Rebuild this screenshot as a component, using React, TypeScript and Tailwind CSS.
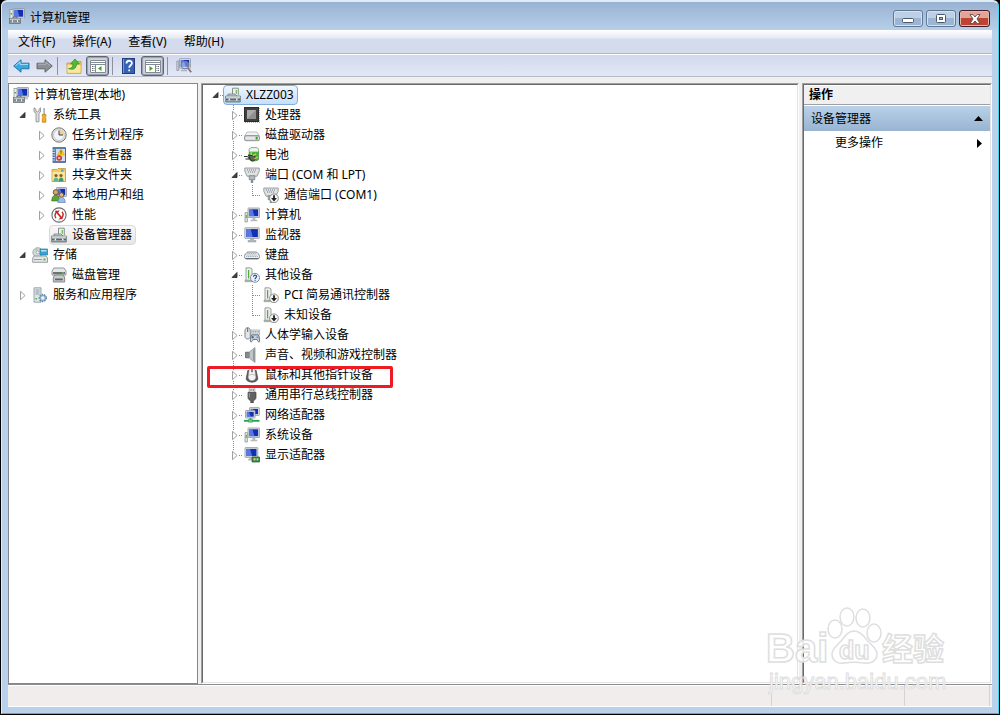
import { ReactNode, useState } from "react";

interface TreeNode {
  label: string;
  icon: ReactNode;
  level: number;
  state?: "open" | "closed";
  selected?: "active" | "inactive";
  last?: boolean;
  marked?: boolean;
}

const Icon = ({ children }: { children: ReactNode }) => (
  <svg viewBox="0 0 16 16" className="w-4 h-4 shrink-0" aria-hidden="true">
    {children}
  </svg>
);

// Blue display on a grey stand, shared by several icons
const Screen = ({ x = 3, y = 1, w = 12, h = 9 }: { x?: number; y?: number; w?: number; h?: number }) => (
  <>
    <rect x={x} y={y} width={w} height={h} rx="0.5" fill="#dfe2e4" stroke="#8f979e" strokeWidth="0.8" />
    <rect x={x + 1.3} y={y + 1.3} width={w - 2.6} height={h - 2.6} fill="#1230b4" />
    <path d={`M${x + 1.3} ${y + 1.3}h${w / 2 - 2.6}l2 ${h - 2.6}h-${w / 2 - 0.6}z`} fill="#6d8df0" opacity="0.75" />
  </>
);

const DownBadge = () => (
  <>
    <circle cx="11" cy="11.3" r="4.4" fill="#f4f4f4" stroke="#777" strokeWidth="0.8" />
    <path d="M10.1 8.3h1.8v2.7h2L11 14.4 8.1 11h2z" fill="#222" />
  </>
);

const ManagementIcon = () => (
  <Icon>
    <Screen x={4} y={0.5} w={11.5} h={9.5} />
    <rect x="1" y="1.5" width="3" height="9" fill="#e9ebec" stroke="#8a9096" strokeWidth="0.7" />
    <rect x="1.5" y="5" width="1.5" height="1.5" fill="#45b02d" />
    <path d="M10 10.4h5v2h-5z" fill="#c5cace" />
    <path d="M4 10.5V9h4v1.5" fill="none" stroke="#5e666c" strokeWidth="0.9" />
    <rect x="0.5" y="10.5" width="11" height="5" fill="#93a0a5" stroke="#626c72" strokeWidth="0.7" />
    <path d="M1 11.2h10" stroke="#cfd7da" />
    <path d="M1 13.1h10" stroke="#5b666b" strokeWidth="0.6" />
    <path d="M3 12.3h1v2H3zM8 12.3h1v2H8z" fill="#eef1f2" />
  </Icon>
);

const ToolsIcon = () => (
  <Icon>
    <path d="M2 .8v4l2 1.4v8.6h3V6.2L8.5 5V.8L7 2.2v2L5.4 5 4 4.2v-2z" fill="#dcdfe1" stroke="#85898d" strokeWidth="0.8" />
    <path d="M11.5 1h1.2v7h-1.2z" fill="#8b9196" />
    <path d="M10.3 7.5h3.6v2l-.6 1 .6 1v3.7h-3.6v-3.7l.6-1-.6-1z" fill="#f4b21c" stroke="#b97908" strokeWidth="0.7" />
  </Icon>
);

const ClockIcon = () => (
  <Icon>
    <circle cx="8" cy="8" r="7.2" fill="#e6e3dc" stroke="#777" />
    <circle cx="8" cy="8" r="5.4" fill="#f0f6fd" stroke="#b6b6b6" strokeWidth="0.6" />
    <path d="M8 8V2.6A5.4 5.4 0 0 1 13.4 8z" fill="#f4cf91" />
    <path d="M8 3.6V8h4" fill="none" stroke="#33455c" />
  </Icon>
);

const EventIcon = () => (
  <Icon>
    <rect x="2" y="0.7" width="12.5" height="14.6" fill="#5b81bd" stroke="#30528f" strokeWidth="0.8" />
    <path d="M5 2h9v12H5z" fill="#cfdff3" />
    <path d="M1 3h3M1 5.5h3M1 8h3M1 10.5h3M1 13h3" stroke="#e8eef6" strokeWidth="0.8" />
    <path d="M10 1.5L13.5 8h-7z" fill="#ffd51f" stroke="#c99800" strokeWidth="0.5" />
    <path d="M10 3.5v2.3M10 6.3v.8" stroke="#222" strokeWidth="0.8" />
    <circle cx="8.2" cy="11" r="2.8" fill="#da2b2e" />
    <path d="M7 9.8l2.4 2.4M9.4 9.8L7 12.2" stroke="#fff" strokeWidth="0.8" />
  </Icon>
);

const SharedIcon = () => (
  <Icon>
    <path d="M1 2.5h5l1-1h7.5v13H1z" fill="#efca66" stroke="#c29a3a" strokeWidth="0.8" />
    <path d="M1.5 5h12.5v9H1.5z" fill="#fbe597" />
    <rect x="10" y="2.5" width="2.5" height="2" fill="#5a9ae0" />
    <circle cx="5" cy="8.5" r="1.6" fill="#805a30" />
    <circle cx="10" cy="8.5" r="1.6" fill="#805a30" />
    <path d="M2.4 14.5c0-5.5 5.2-5.5 5.2 0z" fill="#58b79a" />
    <path d="M7.6 14.5c0-5.5 5-5.5 5 0z" fill="#3d9a6a" />
  </Icon>
);

const UsersIcon = () => (
  <Icon>
    <Screen x={5.5} y={0.5} w={10} h={9} />
    <circle cx="4.8" cy="5.2" r="2.6" fill="#d8a465" stroke="#5f4021" strokeWidth="0.8" />
    <path d="M.7 14c0-8 8-8 8 0z" fill="#5ca338" stroke="#33681c" strokeWidth="0.6" />
    <circle cx="10.5" cy="8" r="2.3" fill="#e6b97f" stroke="#6a4726" strokeWidth="0.8" />
    <path d="M6.8 15.5c0-7 7.5-7 7.5 0z" fill="#9dbbe4" stroke="#4a73ad" strokeWidth="0.6" />
  </Icon>
);

const PerformanceIcon = () => (
  <Icon>
    <circle cx="8" cy="8" r="7.1" fill="#fff" stroke="#6b6b6b" strokeWidth="1.1" />
    <path d="M5 11.2C2.6 8.6 4.6 4.2 8 4.2M11 4.8c2.4 2.6.6 7-2.6 7" fill="none" stroke="#c8292b" strokeWidth="1.4" />
    <path d="M4.6 3.8l6.6 8" stroke="#c22023" strokeWidth="1.7" />
    <path d="M3 8h1M12 8h1M8 2.6v1M8 12.5v1" stroke="#777" strokeWidth="0.7" />
  </Icon>
);

const DeviceIcon = () => (
  <Icon>
    <path d="M7.5 7V1.2h5.8V8" fill="#edf0ef" stroke="#89918f" />
    <path d="M10.7 3h1.1v3.7h-1.1z" fill="#56b62d" />
    <path d="M3 9V7h7l2 2" fill="#c9cecf" stroke="#7a8284" strokeWidth="0.8" />
    <path d="M.7 9h14.6v6H.7z" fill="#98a3a5" stroke="#667072" strokeWidth="0.8" />
    <path d="M1 9.3h14v1.5H1z" fill="#d5dbdb" />
    <path d="M1 12.5h14" stroke="#596466" />
    <path d="M3.6 11.5h1.5v2H3.6zM11 11.5h1.5v2H11z" fill="#edf0f0" />
  </Icon>
);

const StorageIcon = () => (
  <Icon>
    <circle cx="5.7" cy="5.5" r="4.8" fill="#d3dadd" stroke="#8f989c" strokeWidth="0.8" />
    <path d="M5.7 5.5L2 2.5A4.8 4.8 0 0 1 6 .9z" fill="#a9d6b0" />
    <circle cx="5.7" cy="5.5" r="1.4" fill="#fff" stroke="#888" strokeWidth="0.6" />
    <path d="M8 2h7.5v6H8z" fill="#3aa1d5" stroke="#247aa8" strokeWidth="0.7" />
    <path d="M9 3h5.5v1.5H9z" fill="#b5e6fa" />
    <path d="M2 9h12l1.5 2v4.3H.7V11z" fill="#e3e6e7" stroke="#858c90" strokeWidth="0.8" />
    <path d="M2 12.5h8" stroke="#99a1a5" />
    <path d="M11.5 11.5h2v2h-2z" fill="#49c525" />
  </Icon>
);

const DiskIcon = () => (
  <Icon>
    <path d="M3 1h10l2 3v4H1V4z" fill="#e4e6e7" stroke="#7b8184" strokeWidth="0.8" />
    <path d="M2 5h12v2H2z" fill="#6c7276" />
    <path d="M11 5.3h2v1.2h-2z" fill="#5bd030" />
    <path d="M3.5 8h9l1.2 3v4H2.3v-4z" fill="#c7cbcd" stroke="#6b7174" strokeWidth="0.8" />
    <path d="M4 11.5h7.7v1.8H4z" fill="#5e6468" />
  </Icon>
);

const ServicesIcon = () => (
  <Icon>
    <path d="M2 .8h7v14.4H2z" fill="#dfe5e9" stroke="#83909a" strokeWidth="0.8" />
    <path d="M3.5 3h4M3.5 5h4M3.5 7h4" stroke="#879aa6" />
    <path d="M3.5 11h1.5v1.5H3.5z" fill="#46b22e" />
    <circle cx="10.8" cy="11" r="3.4" fill="#a9c7df" stroke="#6288a8" strokeWidth="1.6" strokeDasharray="1.4 1" />
    <circle cx="10.8" cy="11" r="2.6" fill="#c5dced" stroke="#6288a8" strokeWidth="0.6" />
    <circle cx="10.8" cy="11" r="1" fill="#fff" />
  </Icon>
);

const CpuIcon = () => (
  <Icon>
    <path d="M1 15.3h15M15.3 1v14" stroke="#d9a650" strokeWidth="1.2" strokeDasharray="1 1" />
    <rect x="0.5" y="0.5" width="14" height="14" fill="#404040" stroke="#2b2b2b" />
    <path d="M3 3h9v9H3z" fill="#8f8f8f" />
    <path d="M3 3h9l-9 9z" fill="#ababab" />
  </Icon>
);

const DriveIcon = () => (
  <Icon>
    <path d="M3 5h10l2.4 4H.6z" fill="#f2f2f3" stroke="#a6a9ad" strokeWidth="0.7" />
    <rect x="0.5" y="8.7" width="15" height="5" rx="1.6" fill="#d8dbdc" stroke="#777c80" strokeWidth="0.8" />
    <path d="M2 11h9" stroke="#f5f5f5" />
    <path d="M11.7 9.8h1.9v2.7h-1.9z" fill="#36a61e" />
  </Icon>
);

const BatteryIcon = () => (
  <Icon>
    <path d="M5.2 2.2c0-2.2 9.3-2.2 9.3 0v10c0 2.3-9.3 2.3-9.3 0z" fill="#3cb72a" stroke="#4b8243" strokeWidth="0.7" />
    <path d="M5.4 2.2c0-1.9 8.9-1.9 8.9 0v2.6H5.4z" fill="#eef4ed" stroke="#a9b5a7" strokeWidth="0.4" />
    <path d="M7.2 5.2v7.5" stroke="#b3efa8" strokeWidth="1.2" />
    <path d="M4.2 8l3.3 6c3.4.4 4.8-2.7 3-5z" fill="#62675f" stroke="#22251f" strokeWidth="0.9" />
    <path d="M8.8 8.7l3.4-1.9M10.4 11.8l3.4-1.9" stroke="#d4c15c" strokeWidth="1.4" />
    <path d="M0 9.5h3.5l2 2.5H1.5" fill="none" stroke="#333" />
  </Icon>
);

const PlugShape = () => (
  <>
    <path d="M.8 1h14.4v3.2L13 9.2H3L.8 4.2z" fill="#dfe2e3" stroke="#858b8e" strokeWidth="0.8" />
    <path d="M3 3h10M4 5h8" stroke="#737a7e" strokeDasharray="1 1" />
    <path d="M5.2 8.7h5.6v4H5.2z" fill="#b4babd" stroke="#71777a" strokeWidth="0.7" />
    <path d="M6.8 12.7h2.4V16H6.8z" fill="#868c8f" />
  </>
);

const PortIcon = () => (
  <Icon>
    <PlugShape />
  </Icon>
);

const PortDownIcon = () => (
  <Icon>
    <PlugShape />
    <DownBadge />
  </Icon>
);

const ComputerIcon = () => (
  <Icon>
    <Screen x={4} y={1} w={11.5} h={9.5} />
    <path d="M8.5 10.7h2.8v2h2v1.5H6.5v-1.5h2z" fill="#b5babd" />
    <path d="M1 5.5h2.4V15H1z" fill="#dce0e1" stroke="#889095" strokeWidth="0.7" />
    <path d="M1.6 8h1.2v3H1.6z" fill="#4ab832" />
  </Icon>
);

const MonitorIcon = () => (
  <Icon>
    <Screen x={0.8} y={0.8} w={14.4} h={10.6} />
    <path d="M6.5 11.7h3v1.8h2.5V15H4v-1.5h2.5z" fill="#b5babd" stroke="#8b9195" strokeWidth="0.5" />
  </Icon>
);

const KeyboardIcon = () => (
  <Icon>
    <path d="M4 5h8c1.5 0 3.6 3 3.6 4.6S14.5 12 13 12H3C1.5 12 .4 11.2.4 9.6S2.5 5 4 5z" fill="#eceeef" stroke="#6b747d" strokeWidth="0.8" />
    <path d="M3.5 6.5h9M2.7 8h10.6M2.2 9.5h11.6" stroke="#8794a0" strokeWidth="0.8" strokeDasharray="1 .8" />
    <path d="M1.5 11.5h13" stroke="#4b555e" strokeWidth="0.8" />
  </Icon>
);

const TowerShape = () => (
  <>
    <path d="M2 .8h4l2 1v12H2z" fill="#eceeed" stroke="#878c8b" strokeWidth="0.8" />
    <path d="M4 3h1.2v8.5H4z" fill="#51af36" />
    <path d="M1 13.2h8v1.5H1z" fill="#c3c9c7" stroke="#868c8a" strokeWidth="0.6" />
  </>
);

const OtherIcon = () => (
  <Icon>
    <TowerShape />
    <circle cx="11" cy="10.8" r="4.5" fill="#eef2fa" stroke="#68758b" strokeWidth="0.8" />
    <path d="M9.5 9.8c0-2.2 3.1-2 3.1-.2 0 1.1-1.5 1.1-1.5 2.3M11.1 12.7v1" fill="none" stroke="#204ea4" strokeWidth="1.2" />
  </Icon>
);

const UnknownIcon = () => (
  <Icon>
    <TowerShape />
    <DownBadge />
  </Icon>
);

const HidIcon = () => (
  <Icon>
    <path d="M1 4c0-4.5 5.3-4.5 5.3 0v5.5c0 3.3-5.3 3.3-5.3 0z" fill="#e4e7e7" stroke="#60676b" strokeWidth="0.8" />
    <path d="M3.7 1v4" stroke="#5a6165" />
    <path d="M6.7 3h9v5h-9z" fill="#e4e7e9" stroke="#8c9298" strokeWidth="0.6" />
    <path d="M7.5 4.5H15M7.5 6H15" stroke="#838b93" strokeWidth="0.8" strokeDasharray="1 .7" />
    <path d="M7 9c1-2 2.5-1 4-1s3-1 4 1l.8 5.2c-.3 1.5-1.7 1-2.8-1.7H9.2c-1.2 2.7-2.7 3-3 1.5z" fill="#c7d1da" stroke="#4c5c6c" strokeWidth="0.8" />
    <path d="M8.7 9v2.5M7.5 10.2H10M12.5 10.2h1.8" stroke="#334b67" strokeWidth="0.8" />
  </Icon>
);

const SpeakerIcon = () => (
  <Icon>
    <path d="M1.5 5.2h4v5.6h-4z" fill="#858a8d" stroke="#555b5e" strokeWidth="0.7" />
    <path d="M5.3 5L11 .5v15L5.3 11z" fill="#c0c5c7" stroke="#81878b" strokeWidth="0.7" />
    <path d="M9 3.5L11 1v14l-2-2.5z" fill="#92989b" />
  </Icon>
);

const MouseIcon = () => (
  <Icon>
    <path d="M4 3L2.3 11c-1 5.5 12.4 5.5 11.4 0L12 3" fill="#606060" stroke="#3c3c3c" strokeWidth="0.7" />
    <path d="M5.3 2c0-2 5.4-2 5.4 0l1.1 7.5c.6 5.5-8.2 5.5-7.6 0z" fill="#f3f3f2" stroke="#8a8a8a" strokeWidth="0.5" />
    <path d="M8 1.5v3.7" stroke="#4b4b4b" strokeWidth="1.3" />
    <path d="M4.8 8.3c1.8-1.2 4.6-1.2 6.4 0" fill="none" stroke="#9c9c9c" strokeWidth="0.6" />
  </Icon>
);

const UsbIcon = () => (
  <Icon>
    <path d="M5.2.7h5.6v5H5.2z" fill="#e8e8e8" stroke="#9a9a9a" strokeWidth="0.7" />
    <path d="M6.5 2h1v2h-1zM8.7 2h1v2h-1z" fill="#777" />
    <path d="M4 5.3h8v5.2c0 2-1.5 2.4-2.7 3.2V16H6.8v-2.3C5.5 13 4 12.5 4 10.5z" fill="#626262" stroke="#424242" strokeWidth="0.7" />
    <path d="M5.3 6v4.5" stroke="#a1a1a1" />
  </Icon>
);

const NetworkIcon = () => (
  <Icon>
    <Screen x={5.5} y={0.6} w={9.8} h={7.8} />
    <Screen x={1.5} y={3.5} w={9.5} h={7.5} />
    <path d="M5.5 11h2v2h-2z" fill="#55ab50" />
    <path d="M0 13.8h15.5" stroke="#25a55c" strokeWidth="1.9" />
    <path d="M4.5 12.4h4v2.8h-4z" fill="#65cc83" stroke="#298e4a" strokeWidth="0.5" />
  </Icon>
);

const DisplayIcon = () => (
  <Icon>
    <Screen x={1} y={0.6} w={12.8} h={9.8} />
    <path d="M5 10.5h3v3H4V12h1z" fill="#b9bec1" />
    <path d="M8 10h7.5v5H8z" fill="#3d8e50" stroke="#23542d" strokeWidth="0.7" />
    <path d="M9.5 11.3h2v2h-2z" fill="#f0d15d" />
    <path d="M12.6 11.3h1.7v2h-1.7z" fill="#b6d7a8" />
  </Icon>
);

const leftTree: TreeNode[] = [
  { label: "计算机管理(本地)", icon: <ManagementIcon />, level: 0 },
  { label: "系统工具", icon: <ToolsIcon />, level: 1, state: "open" },
  { label: "任务计划程序", icon: <ClockIcon />, level: 2, state: "closed" },
  { label: "事件查看器", icon: <EventIcon />, level: 2, state: "closed" },
  { label: "共享文件夹", icon: <SharedIcon />, level: 2, state: "closed" },
  { label: "本地用户和组", icon: <UsersIcon />, level: 2, state: "closed" },
  { label: "性能", icon: <PerformanceIcon />, level: 2, state: "closed" },
  { label: "设备管理器", icon: <DeviceIcon />, level: 2, selected: "inactive" },
  { label: "存储", icon: <StorageIcon />, level: 1, state: "open" },
  { label: "磁盘管理", icon: <DiskIcon />, level: 2 },
  { label: "服务和应用程序", icon: <ServicesIcon />, level: 1, state: "closed" },
];

const deviceTree: TreeNode[] = [
  { label: "XLZZ003", icon: <DeviceIcon />, level: 0, state: "open", selected: "active" },
  { label: "处理器", icon: <CpuIcon />, level: 1, state: "closed" },
  { label: "磁盘驱动器", icon: <DriveIcon />, level: 1, state: "closed" },
  { label: "电池", icon: <BatteryIcon />, level: 1, state: "closed" },
  { label: "端口 (COM 和 LPT)", icon: <PortIcon />, level: 1, state: "open" },
  { label: "通信端口 (COM1)", icon: <PortDownIcon />, level: 2, last: true },
  { label: "计算机", icon: <ComputerIcon />, level: 1, state: "closed" },
  { label: "监视器", icon: <MonitorIcon />, level: 1, state: "closed" },
  { label: "键盘", icon: <KeyboardIcon />, level: 1, state: "closed" },
  { label: "其他设备", icon: <OtherIcon />, level: 1, state: "open" },
  { label: "PCI 简易通讯控制器", icon: <UnknownIcon />, level: 2 },
  { label: "未知设备", icon: <UnknownIcon />, level: 2, last: true },
  { label: "人体学输入设备", icon: <HidIcon />, level: 1, state: "closed" },
  { label: "声音、视频和游戏控制器", icon: <SpeakerIcon />, level: 1, state: "closed" },
  { label: "鼠标和其他指针设备", icon: <MouseIcon />, level: 1, state: "closed", marked: true },
  { label: "通用串行总线控制器", icon: <UsbIcon />, level: 1, state: "closed" },
  { label: "网络适配器", icon: <NetworkIcon />, level: 1, state: "closed" },
  { label: "系统设备", icon: <ComputerIcon />, level: 1, state: "closed" },
  { label: "显示适配器", icon: <DisplayIcon />, level: 1, state: "closed", last: true },
];

const dots = { stroke: "#8a8a8a", strokeDasharray: "1 1", fill: "none", shapeRendering: "crispEdges" as const };

const Arrow = ({ state }: { state: "open" | "closed" }) =>
  state === "open" ? (
    <path d="M12 7.5v5H7z" fill="#404040" stroke="#262626" strokeWidth="0.8" />
  ) : (
    <path d="M7.5 6.3v8.4l4.6-4.2z" fill="#fff" stroke="#a0a0a0" />
  );

function TreeRow({ node, lines }: { node: TreeNode; lines: boolean }) {
  const { level, state, selected } = node;
  const drawn = lines && level > 0;
  const box =
    selected === "active"
      ? "border-[#84acdd] bg-linear-to-b from-[#f0f7fe] to-[#c4dffb]"
      : selected === "inactive"
        ? "border-[#d9d9d9] bg-linear-to-b from-[#f8f8f8] to-[#e6e6e6]"
        : "border-transparent";
  const indent = lines ? (level === 0 ? "pl-[3px]" : "pl-[22px]") : level === 0 ? "pl-0.5" : "pl-1";

  return (
    <li className={`relative flex h-5 items-center whitespace-nowrap ${indent}`}>
      {level === 2 && (
        <svg viewBox="0 0 19 20" className="w-[19px] h-5 shrink-0" aria-hidden="true">
          {lines && <path d="M8.5 0v20" {...dots} />}
        </svg>
      )}
      {state && (
        <button
          type="button"
          aria-label={`${state === "open" ? "折叠" : "展开"} ${node.label}`}
          className="w-[17px] h-5 shrink-0"
        >
          <svg viewBox="0 0 17 20" className="w-[17px] h-5">
            {drawn && <path d={node.last ? "M8.5 0v5" : "M8.5 0v5M8.5 16v4"} {...dots} />}
            {lines && <path d="M14 10.5h3" {...dots} />}
            <Arrow state={state} />
          </svg>
        </button>
      )}
      {!state && level > 0 && (
        <svg viewBox="0 0 17 20" className="w-[17px] h-5 shrink-0" aria-hidden="true">
          {drawn && <path d={`M8.5 0v${node.last ? 11 : 20}M8.5 10.5h9`} {...dots} />}
        </svg>
      )}
      <span className={`flex h-5 items-center gap-[5px] rounded-sm border pl-px pr-[3px] ${box}`}>
        {node.icon}
        <span>{node.label}</span>
      </span>
      {node.marked && (
        <span className="absolute left-1 top-px z-10 h-[22px] w-[186px] rounded-xs border-3 border-[#ee1b24]" />
      )}
    </li>
  );
}

const ToolSeparator = () => <span className="ml-[3px] mr-2 h-[18px] w-px bg-[#8b919d]" />;

function Toolbar() {
  const [treeShown, setTreeShown] = useState(true);
  const [actionsShown, setActionsShown] = useState(true);
  const toggle = (on: boolean) =>
    `flex h-5 w-[23px] items-center justify-center rounded-[3px] border ${
      on ? "border-[#5c6573] bg-[#d0d4dd] shadow-[inset_0_0_1px_1px_#959ca8]" : "border-transparent"
    }`;

  return (
    <div className="flex h-[23px] items-center border-t border-b border-t-white border-b-[#b6bccc] bg-linear-to-b from-[#d3d9ed] to-[#e2e8f4] pl-[5px]">
      <button type="button" aria-label="后退" className="flex">
        <svg viewBox="0 0 17 16" className="h-4 w-[17px]">
          <path d="M.7 8L8 1.8v3.4h8v5.6H8v3.4z" fill="#39a9e4" stroke="#216b9d" strokeWidth="0.9" />
          <path d="M2.5 7.7L7 3.8v2.6h8" fill="none" stroke="#a6e4fb" />
        </svg>
      </button>
      <button type="button" aria-label="前进" className="ml-[6px] mr-px flex">
        <svg viewBox="0 0 17 16" className="h-4 w-[17px]">
          <path d="M16.3 8L9 1.8v3.4H1v5.6h8v3.4z" fill="#8d9195" stroke="#5e6267" strokeWidth="0.9" />
          <path d="M2 6.2h8V4l4 3.5" fill="none" stroke="#bbbfc2" strokeWidth="0.8" />
        </svg>
      </button>
      <ToolSeparator />
      <button type="button" aria-label="向上一级" className="mr-1 flex">
        <Icon>
          <path d="M1 5h5l1.5-1.5H15v11.8H1z" fill="#efcc68" stroke="#c29831" strokeWidth="0.8" />
          <path d="M1.5 7h13v7.8h-13z" fill="#fae69c" />
          <path d="M2.5 10.5c3 .2 4.5-1.5 4.5-4.5H4.5L9 1l4.500 5h-3c0 4.500-3.800 6.500-8 4.500z" fill="#50be34" stroke="#2b8b22" strokeWidth="0.7" />
        </Icon>
      </button>
      <button type="button" aria-label="显示/隐藏控制台树" aria-pressed={treeShown} className={toggle(treeShown)} onClick={() => setTreeShown(!treeShown)}>
        <Icon>
          <path d="M.5 2.5h15v12H.5z" fill="#fff" stroke="#848b95" />
          <path d="M1 4.5h14M1 6.5h14M5.5 7v7" stroke="#848b95" />
          <path d="M2 8.5h2.5M2 10.5h2.5M2 12.5h2.5" stroke="#666d78" strokeDasharray="1 .5" />
          <path d="M11.5 8v5L8 10.5z" fill="#35a628" />
        </Icon>
      </button>
      <ToolSeparator />
      <button type="button" aria-label="帮助" className="mr-1 flex">
        <Icon>
          <rect x="1.5" y="0.5" width="12" height="15" fill="#3761b5" stroke="#223f7d" />
          <path d="M2.5 1v14" stroke="#7699dc" />
          <path d="M5.5 5.5c0-3.7 5.4-3.5 5.4-.4 0 2.2-2.7 2.1-2.7 4.7M8.2 11.4v1.8" fill="none" stroke="#fff" strokeWidth="1.8" />
        </Icon>
      </button>
      <button type="button" aria-label="显示/隐藏操作窗格" aria-pressed={actionsShown} className={toggle(actionsShown)} onClick={() => setActionsShown(!actionsShown)}>
        <Icon>
          <path d="M.5 2.5h15v12H.5z" fill="#fff" stroke="#848b95" />
          <path d="M1 4.5h14M1 6.5h14M10.5 7v7" stroke="#848b95" />
          <path d="M11.5 8.5H14M11.5 10.5H14M11.5 12.5H14" stroke="#666d78" strokeDasharray="1 .5" />
          <path d="M4.5 8v5L8 10.5z" fill="#35a628" />
        </Icon>
      </button>
      <ToolSeparator />
      <button type="button" aria-label="扫描检测硬件改动" className="flex">
        <Icon>
          <Screen x={3.5} y={0.7} w={11} h={9.5} />
          <path d="M.8 3h2v9.5h-2z" fill="#c6ccd3" stroke="#8991a0" strokeWidth="0.7" />
          <path d="M5 12.5h6" stroke="#aab0ba" strokeWidth="1.5" />
          <circle cx="9" cy="7" r="3.8" fill="#d5e8fb" fillOpacity="0.4" stroke="#747e90" strokeWidth="1.1" />
          <path d="M11.7 9.8l3.5 4.5" stroke="#877482" strokeWidth="1.8" />
        </Icon>
      </button>
    </div>
  );
}

function TitleBar() {
  const glass =
    "flex h-[17px] w-[30px] items-center justify-center rounded-[3px] border border-[#5f7896] shadow-[inset_0_0_0_1px_#d4e2f1] bg-linear-to-b from-[#bdd0e6] from-45% to-[#9bb5d2] to-50%";
  return (
    <header className="flex h-7 items-center pl-px pr-[2px]">
      <ManagementIcon />
      <h1 className="ml-[5px] grow pt-1">计算机管理</h1>
      <div className="flex gap-[3px] pt-[5px]">
        <button type="button" aria-label="最小化" className={glass}>
          <svg viewBox="0 0 12 10" className="h-[10px] w-3">
            <rect x="0.5" y="4.5" width="11" height="4" rx="1" fill="#fff" stroke="#4d586a" />
          </svg>
        </button>
        <button type="button" aria-label="最大化" className={glass}>
          <svg viewBox="0 0 12 10" className="h-[10px] w-3">
            <rect x="1.5" y="0.5" width="9" height="8" rx="1" fill="#fff" stroke="#4d586a" />
            <rect x="4.5" y="3.5" width="3" height="2" fill="#a6bdd9" stroke="#4d586a" />
          </svg>
        </button>
        <button
          type="button"
          aria-label="关闭"
          className="flex h-[17px] w-[31px] items-center justify-center rounded-[3px] border border-[#431a25] bg-linear-to-b from-[#e3a397] from-45% to-[#bd4430] to-50% shadow-[inset_0_0_0_1px_#e8b5aa]"
        >
          <svg viewBox="0 0 12 10" className="h-[10px] w-3">
            <path d="M1 .6h3L6 3 8 .6h3L8 5l3 4.4H8L6 7 4 9.4H1L4 5z" fill="#fff" stroke="#54494f" strokeWidth="0.9" />
          </svg>
        </button>
      </div>
    </header>
  );
}

const menus = ["文件(F)", "操作(A)", "查看(V)", "帮助(H)"];

const Watermark = () => (
  <svg
    viewBox="0 0 194 92"
    className="pointer-events-none absolute bottom-[18px] right-[51px] z-20 h-[92px] w-[194px]"
    fill="#fff"
    fillOpacity="0.85"
    stroke="#dedede"
    strokeWidth="1.5"
    fontFamily='"Liberation Sans", "Noto Sans CJK SC", sans-serif'
    fontWeight="700"
  >
    <ellipse cx="80" cy="24" rx="7" ry="9" />
    <ellipse cx="92" cy="12" rx="7" ry="9" />
    <ellipse cx="108" cy="13" rx="7" ry="9" />
    <ellipse cx="119" cy="28" rx="7" ry="9" />
    <path d="M99 26c-6 0-9 5-12 9-4 5-10 8-10 14 0 7 6 10 12 9 7-1 13-1 20 0 7 1 13-2 13-9 0-6-6-9-10-14-3-4-7-9-13-9z" />
    <text x="11" y="57" fontSize="40">Bai</text>
    <text x="84" y="54" fontSize="25">du</text>
    <text x="127" y="55" fontSize="31">经验</text>
    <text x="14" y="84" fontSize="22" strokeWidth="1" fontWeight="400">jingyan.baidu.com</text>
  </svg>
);

export default function App() {
  return (
    <div className="relative flex min-h-screen flex-col bg-black pl-px font-['Noto_Sans','Noto_Sans_CJK_SC',sans-serif] text-xs leading-4 text-black">
      <div className="mb-px mr-px flex grow flex-col rounded-t-md border border-t-2 border-[#dfebf7] border-b-[#22c4e6] border-r-[#3fd4f2] bg-[#b9d1ea] bg-linear-to-b from-[#98b3d2] to-[#b9d1ea] to-[30px] px-[6px] pb-[6px]">
        <TitleBar />
        <div className="flex grow flex-col bg-[#f0f0f0]">
          <nav className="flex h-6 items-center gap-[17px] border-b border-[#b0b6c6] bg-linear-to-b from-white via-[#e4e9f4] via-35% to-[#d4dbed] to-40% pl-[10px]">
            {menus.map((menu) => (
              <button key={menu} type="button">
                {menu}
              </button>
            ))}
          </nav>
          <Toolbar />

          <main className="flex grow pt-[6px]">
            {/* Console tree */}
            <ul className="w-[190px] shrink-0 border border-[#828790] bg-white pt-px">
              {leftTree.map((node) => (
                <TreeRow key={node.label} node={node} lines={false} />
              ))}
            </ul>

            {/* Devices */}
            <div className="ml-[3px] grow border border-t-[#a0a0a0] border-l-[#a0a0a0] border-r-white border-b-white">
              <ul className="h-full border border-t-[#696969] border-l-[#696969] border-r-[#e3e3e3] border-b-[#e3e3e3] bg-white">
                {deviceTree.map((node) => (
                  <TreeRow key={node.label} node={node} lines />
                ))}
              </ul>
            </div>

            {/* Actions */}
            <aside className="ml-[3px] w-[190px] shrink-0 border border-t-[#a0a0a0] border-l-[#a0a0a0] border-r-white border-b-white">
              <div className="h-full border border-t-[#696969] border-l-[#696969] border-r-[#e3e3e3] border-b-[#e3e3e3] bg-white">
                <h2 className="flex h-5 items-center border-t border-b border-t-white border-b-[#a0a0a0] bg-[#f0f0f0] pl-[5px] font-bold">操作</h2>
                <button type="button" className="mt-px flex h-[25px] w-full items-center justify-between bg-linear-to-b from-[#b9d1ea] to-[#99b4d1] pl-[7px] pr-[7px]">
                  设备管理器
                  <svg viewBox="0 0 9 5" className="h-[5px] w-[9px]">
                    <path d="M0 5l4.5-5L9 5z" />
                  </svg>
                </button>
                <button type="button" className="flex h-6 w-full items-center justify-between pl-[31px] pr-2">
                  更多操作
                  <svg viewBox="0 0 5 9" className="h-[9px] w-[5px]">
                    <path d="M0 0l5 4.5L0 9z" />
                  </svg>
                </button>
              </div>
            </aside>
          </main>

          {/* Status bar */}
          <footer className="flex h-[23px] shrink-0 border-t border-b border-t-[#8a8c90] border-b-white bg-[#f0edec] pr-[2px] shadow-[inset_0_1px_0_#fff]">
            <span className="grow border-r border-[#d5d2d1]" />
            <span className="w-[133px] border-r border-[#d5d2d1]" />
            <span className="w-[85px] border-r border-[#d5d2d1]" />
          </footer>
        </div>
      </div>
      <Watermark />
    </div>
  );
}
